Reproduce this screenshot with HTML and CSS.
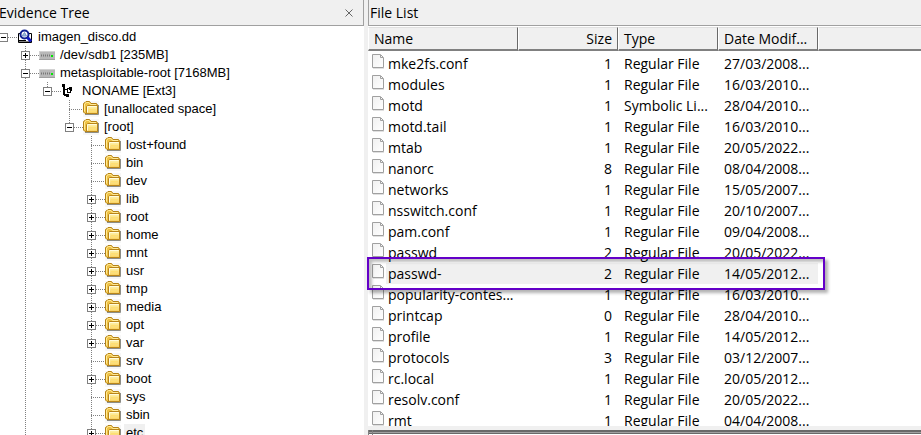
FILE: index.html
```
<!DOCTYPE html>
<html lang="en">
<head>
<meta charset="utf-8">
<title>Evidence Tree</title>
<link rel="stylesheet" href="styles.css">
</head>
<body>
<svg class="defs" aria-hidden="true">
  <defs>
    <linearGradient id="folder-fill" x1="0" y1="0" x2="0" y2="1">
      <stop offset="0" stop-color="#fff6b0"/>
      <stop offset="1" stop-color="#f7cf62"/>
    </linearGradient>
    <linearGradient id="page-fill" x1="0" y1="0" x2="1" y2="1">
      <stop offset="0" stop-color="#f0f0f0"/>
      <stop offset="1" stop-color="#ffffff"/>
    </linearGradient>
    <symbol id="folder" viewBox="0 0 16 16">
      <rect width="16" height="16" fill="#f7f7f7"/>
      <path d="M2 13.500H15.500V4" fill="none" stroke="#8d8d86"/>
      <path d="M.5 11V2.500L2 1.500 3 .5H6.500L8 2.500H13.500L14.500 4V12.500H2Z" fill="#efc245" stroke="#b58216"/>
      <path d="M1.500 10.500V3L3.500 1.500H6L7.500 3.500H13" fill="none" stroke="#ffeb98"/>
      <path d="M3.500 12V5.500L4.500 4.500H14.500V12.500H3.500Z" fill="url(#folder-fill)" stroke="#b98518"/>
      <path d="M4.500 11.500V6L5 5.500H13.500" fill="none" stroke="#fffbdc"/>
      <path d="M6 8.500H13M6 10.500H13" fill="none" stroke="#ffdf70"/>
    </symbol>
    <symbol id="drive" viewBox="0 0 16 16">
      <rect y="4" width="16" height="9" fill="#b8b8b8"/>
      <path d="M0 4.500H16M.5 4V13" fill="none" stroke="#d2d2d2"/>
      <path d="M0 12.500H16" stroke="#a0a0a0"/>
      <path d="M2 8.500H11" stroke="#777" stroke-width="2" stroke-dasharray="1 1"/>
      <rect x="12" y="8" width="2" height="2" fill="#00e800"/>
    </symbol>
    <symbol id="partition" viewBox="0 0 16 16" shape-rendering="crispEdges">
      <path d="M1 1H4V4H1ZM5 11H8V14H5ZM2 3H4V12H2ZM3 11H6V13H3ZM3 6H7V7H3Z"/>
      <path d="M6.500 5.500H9.500V9.500H6.500ZM8.500 4.500H10.500V7.500H8.500Z" fill="none" stroke="#000"/>
      <path d="M7 7H9V9H7Z" fill="#fff"/>
    </symbol>
    <symbol id="image" viewBox="0 0 16 16">
      <path d="M4 4.500H1.500V13.500H14.500V4.500H12M2 11.500H9" fill="none" stroke="#000"/>
      <path d="M2 13H14" stroke="#000"/>
      <circle cx="7.500" cy="5.500" r="4" fill="#fff" stroke="#102090" stroke-width="2"/>
      <path d="M5 7L7.500 3.500 9.500 7Z" fill="#9acbd0" stroke="#7a8ec8"/>
      <path d="M10.500 8.500L14 12.500" stroke="#1018c0" stroke-width="3"/>
    </symbol>
    <symbol id="page" viewBox="0 0 12 15">
      <path d="M.5 .5H8.500L11.500 3.500V13.500H.5Z" fill="url(#page-fill)" stroke="#a0a0a0"/>
      <path d="M8.500 1V3.500H11" fill="none" stroke="#a0a0a0"/>
      <path d="M1 14.500H12" stroke="#e0e0e0"/>
    </symbol>
  </defs>
</svg>
<main class="app">
  <section class="panel tree-panel">
    <header class="panel-title">
      <h2>Evidence Tree</h2>
      <button class="close" aria-label="Close"><svg viewBox="0 0 8 8"><path d="M.5 .5L7.500 7.500M7.500 .5L.5 7.500" stroke="#666" fill="none"/></svg></button>
    </header>
    <ul class="tree" id="tree"></ul>
  </section>
  <div class="right">
    <section class="panel list-panel">
      <header class="panel-title"><h2>File List</h2></header>
      <table class="files">
        <colgroup><col class="c-name"><col class="c-col"><col class="c-col"><col class="c-col"><col></colgroup>
        <thead><tr><th>Name</th><th class="num">Size</th><th>Type</th><th>Date Modif...</th><th></th></tr></thead>
        <tbody id="files"></tbody>
      </table>
    </section>
    <section class="viewer"></section>
  </div>
</main>
<script src="app.js"></script>
</body>
</html>
```
FILE: styles.css
```
*, *::before, *::after { box-sizing: border-box; }
body {
  margin: 0;
  background: #f0f0f0;
  color: #000;
  font-family: "Open Sans", "Noto Sans", sans-serif;
  font-size: 14px;
}
.defs { position: absolute; width: 0; height: 0; }
.app { display: flex; height: 100vh; overflow: hidden; gap: 4px; }
.panel-title {
  display: flex;
  align-items: center;
  justify-content: space-between;
  height: 26px;
  flex: none;
  background: #f0f0f0;
  border-bottom: 1px solid #a0a0a0;
}
.panel-title h2 { margin: 0; font-size: 14px; font-weight: 400; line-height: 24px; }
.tree-panel { flex: 0 0 364px; background: #fff; overflow: hidden; }
.tree-panel .panel-title { border-right: 1px solid #a0a0a0; padding-right: 10px; }
.tree-panel h2 { margin-left: -1px; }
.close { border: 0; padding: 0; background: none; width: 8px; height: 8px; display: flex; }
.close svg { width: 8px; height: 8px; }

.tree, .tree ul { list-style: none; margin: 0; padding: 0; }
.tree { margin: 2px 0 0 -1px; font-family: "Liberation Sans", Arial, sans-serif; font-size: 13px; }
.tree ul { padding-left: 22px; }
.tree li { position: relative; }
.tree li li::before {
  content: "";
  position: absolute;
  left: 4px;
  top: 0;
  bottom: 0;
  width: 1px;
  background: repeating-linear-gradient(#808080 0 1px, transparent 1px 2px);
}
.tree li li:last-child::before { bottom: auto; height: 9px; }
.tree li li.more::before { bottom: 0; height: auto; }
.row { display: flex; align-items: center; height: 18px; }
.toggle {
  position: relative;
  flex: none;
  width: 9px;
  height: 9px;
  padding: 0;
  border: 1px solid #808080;
  background: linear-gradient(#000, #000) center / 5px 1px no-repeat #fff;
}
.toggle.closed {
  background: linear-gradient(#000, #000) center / 5px 1px no-repeat, linear-gradient(#000, #000) center / 1px 5px no-repeat, #fff;
}
.stem { flex: none; width: 9px; height: 1px; background: repeating-linear-gradient(90deg, #808080 0 1px, transparent 1px 2px); }
.stem.leaf { width: 14px; margin-left: 4px; }
.icon { position: relative; flex: none; width: 16px; height: 16px; }
.label { padding: 0 2px; margin-left: 3px; line-height: 18px; white-space: nowrap; }
.label.current { background: #f0f0f0; }

.right { flex: 1; min-width: 0; display: flex; flex-direction: column; }
.list-panel { flex: 1; min-height: 0; background: #fff; }
.list-panel .panel-title { border-left: 1px solid #a0a0a0; padding-left: 1px; }
.files { width: 100%; table-layout: fixed; border-collapse: separate; border-spacing: 0; margin-top: 1px; }
.c-name { width: 150px; }
.c-col { width: 100px; }
.files th {
  height: 24px;
  padding: 0 5px;
  background: #f0f0f0;
  border: solid;
  border-width: 1px 1px 2px 1px;
  border-color: #e0e0e0 #696969 #808080 #fff;
  font-size: 14px;
  font-weight: 400;
  line-height: 21px;
  text-align: left;
  white-space: nowrap;
}
.files th:last-child { border-right: 0; }
.files th.num { text-align: right; }
.files td { height: 21px; padding: 0 6px; line-height: 21px; white-space: nowrap; }
.files td.num { text-align: right; }
.files tbody::before { content: ""; display: table-row; height: 2px; }
.files td:first-child { padding: 0 0 0 4px; }
.name { display: flex; gap: 2px; height: 21px; }
.name svg { flex: none; width: 12px; height: 15px; margin-top: 1px; }
.name span { flex: 1; padding-left: 2px; }
.selected { position: relative; }
.selected .name span, .selected td:not(:first-child):not(:last-child) { background: #f0f0f0; }
.selected td:first-child::after {
  content: "";
  position: absolute;
  left: -1px;
  top: -6px;
  width: 458px;
  height: 33px;
  border: 2px solid #6400c8;
  box-shadow: 3px 3px 3px rgba(0, 0, 0, .3), inset 3px 3px 3px rgba(0, 0, 0, .25);
}
.viewer {
  position: relative;
  flex: none;
  height: 9px;
  background: linear-gradient(#696969 0 2px, #a0a0a0 2px 3px, #696969 3px 4px, #fff 4px) 0 4px no-repeat #f0f0f0;
}
.viewer::before { content: ""; position: absolute; left: 0; top: 4px; bottom: 0; width: 5px; border: solid #808080; border-width: 0 1px; }
```
FILE: app.js
```
const tree = [
  { t: "imagen_disco.dd", i: "image", kids: [
    { t: "/dev/sdb1 [235MB]", i: "drive", closed: true },
    { t: "metasploitable-root [7168MB]", i: "drive", more: true, kids: [
      { t: "NONAME [Ext3]", i: "partition", kids: [
        { t: "[unallocated space]" },
        { t: "[root]", kids: [
          { t: "lost+found" }, { t: "bin" }, { t: "dev" },
          { t: "lib", closed: true }, { t: "root", closed: true }, { t: "home", closed: true },
          { t: "mnt", closed: true }, { t: "usr", closed: true }, { t: "tmp", closed: true },
          { t: "media", closed: true }, { t: "opt", closed: true }, { t: "var", closed: true },
          { t: "srv" }, { t: "boot", closed: true }, { t: "sys" }, { t: "sbin" },
          { t: "etc", closed: true, current: true }
        ] }
      ] }
    ] }
  ] }
];

function node(n) {
  const toggle = n.kids || n.closed
    ? `<button class="toggle ${n.closed ? "closed" : ""}" aria-label="Toggle ${n.t}"></button><span class="stem"></span>`
    : `<span class="stem leaf"></span>`;
  return `<li class="${n.more ? "more" : ""}"><div class="row">${toggle}` +
    `<svg class="icon"><use href="#${n.i || "folder"}"/></svg>` +
    `<span class="label ${n.current ? "current" : ""}">${n.t}</span></div>` +
    (n.kids ? `<ul>${n.kids.map(node).join("")}</ul>` : "") + `</li>`;
}
document.getElementById("tree").innerHTML = tree.map(node).join("");

const R = "Regular File";
const files = [
  ["mke2fs.conf", 1, R, "27/03/2008..."],
  ["modules", 1, R, "16/03/2010..."],
  ["motd", 1, "Symbolic Li...", "28/04/2010..."],
  ["motd.tail", 1, R, "16/03/2010..."],
  ["mtab", 1, R, "20/05/2022..."],
  ["nanorc", 8, R, "08/04/2008..."],
  ["networks", 1, R, "15/05/2007..."],
  ["nsswitch.conf", 1, R, "20/10/2007..."],
  ["pam.conf", 1, R, "09/04/2008..."],
  ["passwd", 2, R, "20/05/2022..."],
  ["passwd-", 2, R, "14/05/2012..."],
  ["popularity-contes...", 1, R, "16/03/2010..."],
  ["printcap", 0, R, "28/04/2010..."],
  ["profile", 1, R, "14/05/2012..."],
  ["protocols", 3, R, "03/12/2007..."],
  ["rc.local", 1, R, "20/05/2012..."],
  ["resolv.conf", 1, R, "20/05/2022..."],
  ["rmt", 1, R, "04/04/2008..."]
];
document.getElementById("files").innerHTML = files.map(([name, size, type, date]) =>
  `<tr class="${name === "passwd-" ? "selected" : ""}"><td><div class="name"><svg><use href="#page"/></svg><span>${name}</span></div></td>` +
  `<td class="num">${size}</td><td>${type}</td><td>${date}</td><td></td></tr>`).join("");
```
